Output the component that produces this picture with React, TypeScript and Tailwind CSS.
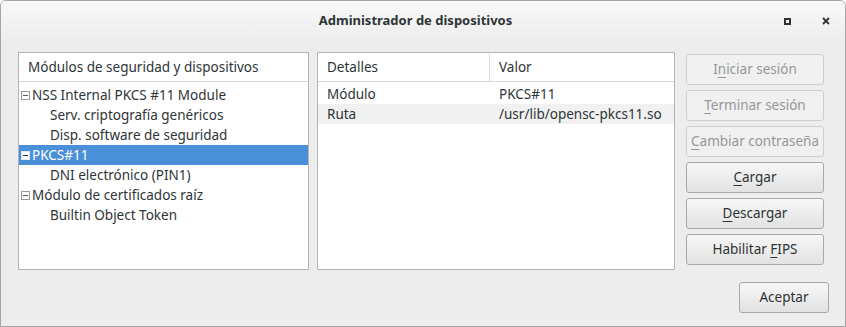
import React from 'react';

const font = { fontFamily: '"Noto Sans", "DejaVu Sans", sans-serif' };

function Expander({ selected }: { selected?: boolean }) {
    return (
        <svg width="9" height="9" viewBox="0 0 9 9" className="shrink-0">
            <rect x="0.5" y="0.5" width="8" height="8" fill="#ffffff" stroke={selected ? '#dbe7f5' : '#9a9a9a'} />
            <line x1="2" y1="4.5" x2="7" y2="4.5" stroke={selected ? '#2e3436' : '#555753'} />
        </svg>
    );
}

type TreeRow = { label: string; level: number; selected?: boolean };

const treeRows: TreeRow[] = [
    { label: 'NSS Internal PKCS #11 Module', level: 0 },
    { label: 'Serv. criptografía genéricos', level: 1 },
    { label: 'Disp. software de seguridad', level: 1 },
    { label: 'PKCS#11', level: 0, selected: true },
    { label: 'DNI electrónico (PIN1)', level: 1 },
    { label: 'Módulo de certificados raíz', level: 0 },
    { label: 'Builtin Object Token', level: 1 },
];

function DialogButton({
    pre = '',
    mnemonic,
    post,
    disabled,
}: {
    pre?: string;
    mnemonic: string;
    post: string;
    disabled?: boolean;
}) {
    return (
        <button
            className={`block h-[31px] w-full rounded-[3px] border text-center text-[13.5px] ${
                disabled
                    ? 'border-[#cfcfcf] bg-[#f0f0f0] text-[#959899]'
                    : 'border-[#a9a9a9] bg-gradient-to-b from-[#f7f7f7] to-[#e2e2e2] text-[#2e3436]'
            }`}
        >
            <span className="whitespace-pre">
                {pre}
                <span className="underline decoration-1 underline-offset-[3px]">{mnemonic}</span>
                {post}
            </span>
        </button>
    );
}

export default function App() {
    return (
        <div
            className="flex h-[327px] w-[846px] flex-col overflow-hidden rounded-t-[6px] border border-[#a5a5a5] bg-[#ededed]"
            style={font}
        >
            {/* Title bar */}
            <div className="flex h-[39px] shrink-0 items-center bg-gradient-to-b from-[#f9f9f9] to-[#ededed]">
                <div className="flex-1" />
                <div className="text-[13px] font-bold text-[#2e3436]">Administrador de dispositivos</div>
                <div className="flex flex-1 items-center justify-end gap-[31px] pr-[15px] pt-[1px]">
                    <div className="h-[7px] w-[7px] border-2 border-[#2e3436]" />
                    <svg width="8" height="8" viewBox="0 0 8 8">
                        <path d="M1 1 L7 7 M7 1 L1 7" stroke="#2e3436" strokeWidth="1.8" />
                    </svg>
                </div>
            </div>

            {/* Content */}
            <div className="flex pl-[17px] pt-[12px]">
                {/* Tree panel */}
                <div className="h-[218px] w-[291px] border border-[#b3b3b3] bg-white text-[13.5px] text-[#2e3436]">
                    <div className="flex h-[29px] items-center border-b border-[#d5d5d5] pl-[9px] pt-[1px]">
                        Módulos de seguridad y dispositivos
                    </div>
                    <div className="pt-[3px]">
                        {treeRows.map((row) => (
                            <div
                                key={row.label}
                                className={`flex h-[20px] items-center ${
                                    row.selected ? 'bg-[#4a90d9] text-white' : ''
                                } ${row.level === 0 ? 'gap-[2px] pl-[2px]' : 'pl-[31px]'}`}
                            >
                                {row.level === 0 && <Expander selected={row.selected} />}
                                <span>{row.label}</span>
                            </div>
                        ))}
                    </div>
                </div>

                {/* Details panel */}
                <div className="ml-[8px] h-[218px] w-[358px] border border-[#b3b3b3] bg-white text-[13.5px] text-[#2e3436]">
                    <div className="flex h-[29px] items-center border-b border-[#d5d5d5] pt-[1px]">
                        <div className="w-[171px] pl-[9px]">Detalles</div>
                        <div className="h-full w-px bg-[#dadada]" />
                        <div className="pl-[9px]">Valor</div>
                    </div>
                    <div className="pt-[2px]">
                        <div className="flex h-[20px] items-center">
                            <div className="w-[181px] pl-[9px]">Módulo</div>
                            <div>PKCS#11</div>
                        </div>
                        <div className="flex h-[20px] items-center bg-[#f1f1f1]">
                            <div className="w-[181px] pl-[9px]">Ruta</div>
                            <div>/usr/lib/opensc-pkcs11.so</div>
                        </div>
                    </div>
                </div>

                {/* Buttons */}
                <div className="ml-[11px] flex w-[138px] flex-col gap-[5px] pt-[2px]">
                    <DialogButton pre="I" mnemonic="n" post="iciar sesión" disabled />
                    <DialogButton mnemonic="T" post="erminar sesión" disabled />
                    <DialogButton mnemonic="C" post="ambiar contraseña" disabled />
                    <DialogButton mnemonic="C" post="argar" />
                    <DialogButton mnemonic="D" post="escargar" />
                    <DialogButton pre="Habilitar " mnemonic="F" post="IPS" />
                </div>
            </div>

            {/* Footer */}
            <div className="flex justify-end pr-[16px] pt-[12px]">
                <button className="h-[31px] w-[90px] rounded-[3px] border border-[#a9a9a9] bg-gradient-to-b from-[#f7f7f7] to-[#e2e2e2] text-[13.5px] text-[#2e3436]">
                    Aceptar
                </button>
            </div>
        </div>
    );
}
